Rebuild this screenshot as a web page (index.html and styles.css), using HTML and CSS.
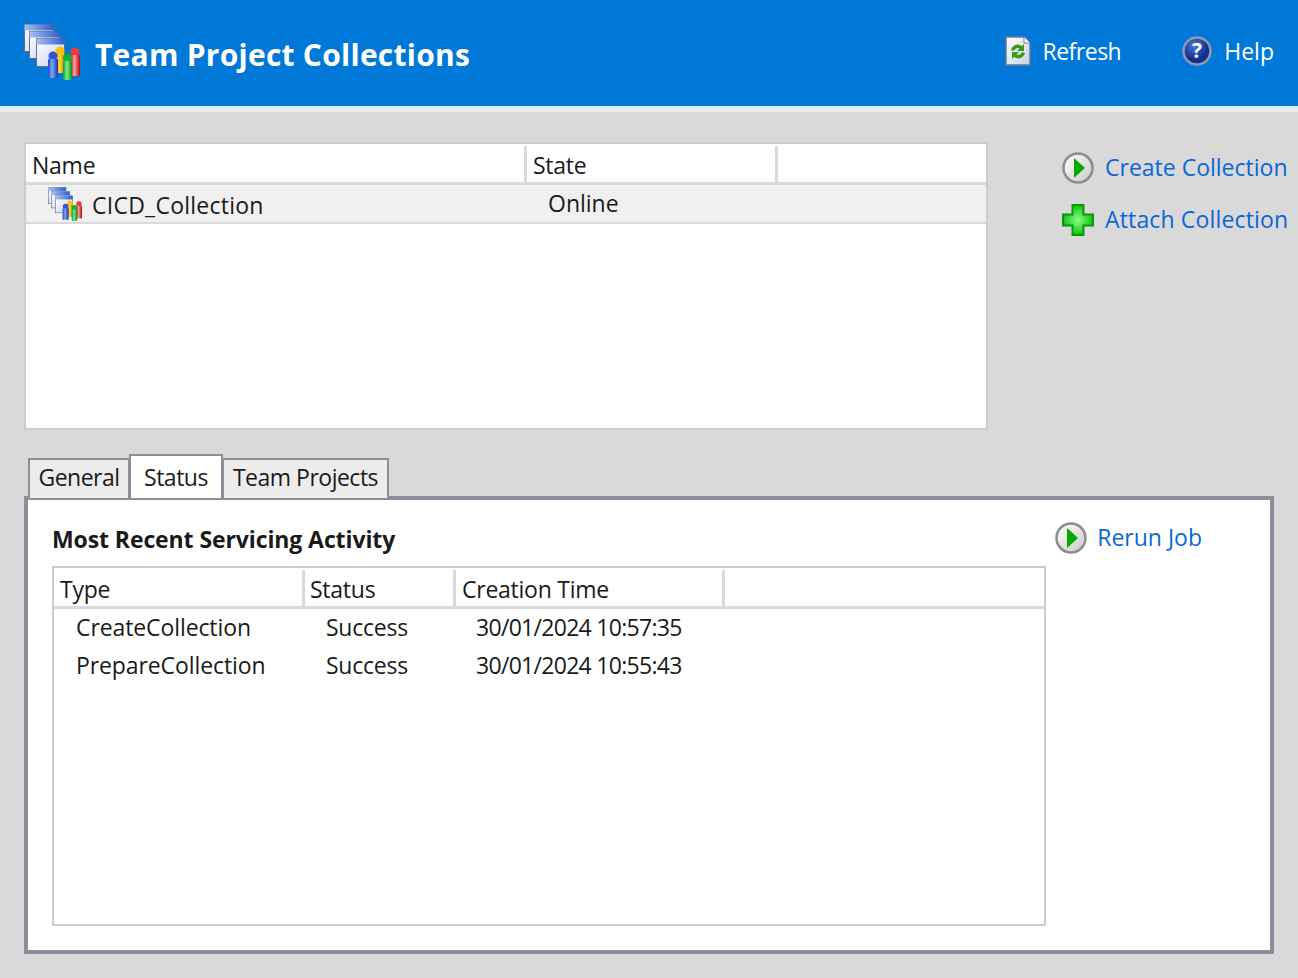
FILE: index.html
```html
<!DOCTYPE html>
<html lang="en">
<head>
  <meta charset="UTF-8">
  <title>Team Project Collections</title>
  <link rel="stylesheet" href="styles.css">
</head>
<body>
  <svg class="defs" width="0" height="0">
    <defs>
      <linearGradient id="win" x1="0" y1="0" x2="1" y2="1"><stop offset="0" stop-color="#ffffff"/><stop offset="1" stop-color="#c4d0ea"/></linearGradient>
      <linearGradient id="winbar" x1="0" y1="0" x2="1" y2="0"><stop offset="0" stop-color="#a9c0ef"/><stop offset="1" stop-color="#2f5fd0"/></linearGradient>
      <linearGradient id="bodyblue" x1="0" y1="0" x2="1" y2="0"><stop offset="0" stop-color="#1c45cc"/><stop offset="0.4" stop-color="#7fa4f4"/><stop offset="1" stop-color="#1235a8"/></linearGradient>
      <linearGradient id="bodyyellow" x1="0" y1="0" x2="1" y2="0"><stop offset="0" stop-color="#f5a800"/><stop offset="0.5" stop-color="#ffd24a"/><stop offset="1" stop-color="#d98a00"/></linearGradient>
      <linearGradient id="bodygreen" x1="0" y1="0" x2="1" y2="0"><stop offset="0" stop-color="#08a820"/><stop offset="0.45" stop-color="#6ef08a"/><stop offset="1" stop-color="#058a18"/></linearGradient>
      <linearGradient id="bodyred" x1="0" y1="0" x2="1" y2="0"><stop offset="0" stop-color="#d80000"/><stop offset="0.45" stop-color="#f0a0a0"/><stop offset="1" stop-color="#c00000"/></linearGradient>
      <radialGradient id="plusglow"><stop offset="0" stop-color="#8dfc8d"/><stop offset="1" stop-color="#0cc40c"/></radialGradient>
      <radialGradient id="helpball" cx="0.4" cy="0.3"><stop offset="0" stop-color="#4a78d8"/><stop offset="1" stop-color="#0f2f92"/></radialGradient>
      <linearGradient id="playball" x1="0" y1="0" x2="1" y2="1"><stop offset="0" stop-color="#ffffff"/><stop offset="1" stop-color="#c9c9c9"/></linearGradient>

      <symbol id="collections" viewBox="0 0 56 56">
        <g stroke="#5f7088" stroke-width="1">
          <rect x="0.500" y="0.500" width="29" height="27" fill="url(#win)"/>
          <rect x="0.500" y="0.500" width="29" height="6" fill="url(#winbar)" stroke="none"/>
          <rect x="5.500" y="7.500" width="30" height="27" fill="url(#win)"/>
          <rect x="5.500" y="7.500" width="30" height="6" fill="url(#winbar)" stroke="none"/>
          <rect x="12.500" y="14.500" width="28" height="28" fill="url(#win)"/>
          <rect x="12.500" y="14.500" width="28" height="6" fill="url(#winbar)" stroke="none"/>
        </g>
        <circle cx="36" cy="27" r="4.500" fill="#ffc000"/>
        <rect x="32" y="30" width="8" height="19" rx="2" fill="url(#bodyyellow)"/>
        <circle cx="51" cy="28" r="4.500" fill="#ee3a3a"/>
        <rect x="46" y="31" width="10" height="21" rx="2" fill="url(#bodyred)"/>
        <circle cx="29" cy="32" r="4.500" fill="#2a55d8"/>
        <rect x="24" y="35" width="10" height="19" rx="1" fill="url(#bodyblue)"/>
        <circle cx="43.500" cy="34" r="4.500" fill="#10b030"/>
        <rect x="39" y="37" width="9" height="19" rx="2" fill="url(#bodygreen)"/>
      </symbol>

      <symbol id="play" viewBox="0 0 32 32">
        <circle cx="16" cy="16" r="14.5" fill="url(#playball)" stroke="#8c8c8c" stroke-width="2.5"/>
        <path d="M12 6 L23 16 L12 26 Z" fill="#03a803"/>
      </symbol>

      <symbol id="plus" viewBox="0 0 32 32">
        <path d="M10.5 1 H21.500 V10.500 H31 V21.500 H21.500 V31 H10.500 V21.500 H1 V10.500 H10.500 Z" fill="url(#plusglow)" stroke="#069a06" stroke-width="2"/>
      </symbol>

      <symbol id="refresh" viewBox="0 0 26 30">
        <path d="M1 1 H19 L25 7 V29 H1 Z" fill="url(#win)" stroke="#6d7a90" stroke-width="1.500"/>
        <path d="M19 1 V7 H25" fill="#ffffff" stroke="#6d7a90" stroke-width="1"/>
        <path d="M6 14 A7 7 0 0 1 17 10 L19 8 V15 H12 L14.500 12.500 A4 4 0 0 0 9 15 Z" fill="#3f9a10"/>
        <path d="M20 17 A7 7 0 0 1 9 21 L7 23 V16 H14 L11.500 18.500 A4 4 0 0 0 17 16 Z" fill="#3f9a10"/>
      </symbol>

      <symbol id="help" viewBox="0 0 30 30">
        <circle cx="15" cy="15" r="13.500" fill="url(#helpball)" stroke="#9198a8" stroke-width="2.500"/>
        <text x="15" y="22" text-anchor="middle" class="help-mark">?</text>
      </symbol>
    </defs>
  </svg>

  <header class="topbar">
    <svg class="logo"><use href="#collections"/></svg>
    <h1>Team Project Collections</h1>
    <a class="top-link refresh-link"><svg class="refresh-icon"><use href="#refresh"/></svg>Refresh</a>
    <a class="top-link help-link"><svg class="help-icon"><use href="#help"/></svg>Help</a>
  </header>

  <main class="content">
    <section class="upper">
      <div class="listbox collections-list">
        <div class="list-head">
          <div class="name-col">Name</div>
          <div class="state-col">State</div>
          <div class="rest-col"></div>
        </div>
        <div class="collection-row">
          <svg class="row-icon"><use href="#collections"/></svg>
          <span class="row-name">CICD_Collection</span>
          <span class="row-state">Online</span>
        </div>
      </div>
      <div class="side-actions">
        <a class="action"><svg class="action-icon"><use href="#play"/></svg><span class="action-label">Create Collection</span></a>
        <a class="action attach"><svg class="action-icon"><use href="#plus"/></svg><span class="action-label">Attach Collection</span></a>
      </div>
    </section>

    <nav class="tabs">
      <div class="tab tab-general">General</div>
      <div class="tab tab-status active">Status</div>
      <div class="tab tab-projects">Team Projects</div>
    </nav>

    <section class="panel">
      <div class="panel-top">
        <h2>Most Recent Servicing Activity</h2>
        <a class="action rerun"><svg class="action-icon"><use href="#play"/></svg><span class="action-label">Rerun Job</span></a>
      </div>
      <div class="listbox jobs-list">
        <div class="list-head jobs-head">
          <div class="type-col">Type</div>
          <div class="status-col">Status</div>
          <div class="time-col">Creation Time</div>
          <div class="rest-col"></div>
        </div>
        <div class="job-row">
          <span>CreateCollection</span>
          <span>Success</span>
          <span>30/01/2024 10:57:35</span>
        </div>
        <div class="job-row">
          <span>PrepareCollection</span>
          <span>Success</span>
          <span>30/01/2024 10:55:43</span>
        </div>
      </div>
    </section>
  </main>
</body>
</html>
```

FILE: styles.css
```css
* {
  box-sizing: border-box;
}
html, body {
  height: 100%;
}
body {
  margin: 0;
  background-color: #d9d9d9;
  color: #1a1a1a;
  font-family: "Open Sans", "Noto Sans", sans-serif;
  font-size: 23px;
  overflow: hidden;
}
.defs {
  display: block;
  height: 0;
}
.help-mark {
  fill: #ffffff;
  font-family: "Open Sans", sans-serif;
  font-size: 21px;
  font-weight: 700;
}

/* header */
.topbar {
  display: flex;
  height: 112px;
  padding: 0 24px 6px;
  background-color: #0078d7;
  border-bottom: 6px solid #dfeefb;
  color: #ffffff;
}
.logo {
  width: 56px;
  height: 56px;
  margin-top: 24px;
  flex: none;
}
.topbar h1 {
  margin: 35px 0 0 15px;
  font-size: 30px;
  line-height: 40px;
  font-weight: 700;
  letter-spacing: 0.25px;
  white-space: nowrap;
}
.top-link {
  display: flex;
  align-items: flex-start;
  margin-top: 36px;
  line-height: 30px;
}
.refresh-link {
  margin-left: auto;
  letter-spacing: -0.5px;
}
.help-link {
  margin-left: 61px;
}
.refresh-icon {
  width: 26px;
  height: 30px;
  margin-right: 12px;
}
.help-icon {
  width: 30px;
  height: 30px;
  margin-right: 12px;
}

/* upper area */
.content {
  padding: 30px 24px 0;
}
.upper {
  display: flex;
}
.listbox {
  background-color: #ffffff;
  border: 2px solid #cccccc;
}
.collections-list {
  width: 964px;
  height: 288px;
  padding-top: 2px;
  flex: none;
}
.list-head {
  display: flex;
  height: 39px;
  line-height: 39px;
  letter-spacing: -0.25px;
  border-bottom: 3px solid #d9d9d9;
}
.list-head > div {
  border-right: 3px solid #d9d9d9;
  padding-left: 6px;
}
.list-head .rest-col {
  flex: 1;
  border-right: 0;
}
.name-col {
  width: 501px;
}
.state-col {
  width: 251px;
}
.collection-row {
  display: flex;
  align-items: center;
  height: 39px;
  background-color: #f0f0f0;
  border-bottom: 2px solid #d9d9d9;
}
.row-icon {
  width: 34px;
  height: 34px;
  margin-left: 22px;
  flex: none;
}
.row-name {
  width: 456px;
  margin-left: 10px;
  margin-top: 2px;
  letter-spacing: 0.25px;
}
.row-state {
  margin-top: -1px;
}
.side-actions {
  display: flex;
  flex-direction: column;
  gap: 20px;
  margin-left: 74px;
  padding-top: 10px;
  white-space: nowrap;
}
.action {
  display: flex;
  align-items: center;
  height: 32px;
  color: #0a66d8;
}
.action-label {
  margin-top: -2px;
}
.attach .action-label {
  letter-spacing: 0.15px;
}
.action-icon {
  width: 32px;
  height: 32px;
  margin-right: 11px;
  flex: none;
}

/* tabs */
.tabs {
  display: flex;
  align-items: flex-end;
  height: 68px;
  margin-left: 4px;
  margin-bottom: -2px;
  position: relative;
  z-index: 1;
  letter-spacing: -0.5px;
}
.tab {
  height: 40px;
  border: 2px solid #8a8f9a;
  border-bottom: 0;
  background-color: #ececec;
  text-align: center;
  line-height: 34px;
}
.tab-general {
  width: 102px;
}
.tab-status {
  width: 94px;
  margin-left: -1px;
  height: 44px;
  line-height: 42px;
  background-color: #ffffff;
}
.tab-projects {
  width: 167px;
  margin-left: -1px;
}

/* panel */
.panel {
  width: 1250px;
  height: 458px;
  padding: 23px 24px 0;
  background-color: #ffffff;
  border: 4px solid #8a8f9a;
}
.panel-top {
  display: flex;
  justify-content: space-between;
  height: 43px;
}
.panel-top h2 {
  margin: 0;
  font-size: 23px;
  line-height: 32px;
  font-weight: 700;
  letter-spacing: -0.1px;
}
.rerun {
  margin-right: 44px;
  margin-top: -1px;
}
.rerun .action-icon {
  margin-right: 10px;
}
.jobs-list {
  width: 994px;
  height: 360px;
  padding-top: 2px;
}
.jobs-head .type-col {
  width: 251px;
}
.jobs-head .status-col {
  width: 151px;
  padding-left: 5px;
}
.jobs-head .time-col {
  width: 269px;
}
.job-row {
  display: flex;
  height: 38px;
  line-height: 36px;
  padding-left: 22px;
}
.job-row span:nth-child(1) {
  width: 250px;
  letter-spacing: -0.1px;
}
.job-row span:nth-child(2) {
  width: 150px;
  letter-spacing: -0.25px;
}
.job-row span:nth-child(3) {
  letter-spacing: -0.7px;
}
```
